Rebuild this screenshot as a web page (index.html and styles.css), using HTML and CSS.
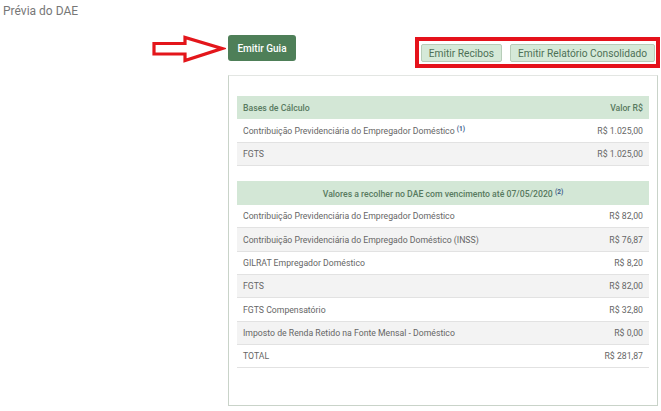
FILE: index.html
```html
<!DOCTYPE html>
<html lang="pt-BR">
<head>
    <meta charset="UTF-8">
    <title>Prévia do DAE</title>
    <link rel="stylesheet" href="styles.css">
</head>
<body>

<div class="page">
    <h1 class="title">Prévia do DAE</h1>

    <div class="toolbar">
        <svg class="arrow" width="76" height="28" viewBox="0 0 76 28">
            <path d="M4,8.5 H35 V2.5 L72,13.5 L35,25.5 V19 H4 Z" fill="#fff" stroke="#e3161b" stroke-width="3.2" stroke-linejoin="miter"/>
        </svg>
        <button class="btn-primary">Emitir Guia</button>
        <div class="highlight">
            <button class="btn-light">Emitir Recibos</button>
            <button class="btn-light">Emitir Relatório Consolidado</button>
        </div>
    </div>

    <div class="panel">
        <table class="dae-table">
            <tr class="head">
                <th>Bases de Cálculo</th>
                <th class="val">Valor R$</th>
            </tr>
            <tr>
                <td>Contribuição Previdenciária do Empregador Doméstico <sup>(1)</sup></td>
                <td class="val">R$ 1.025,00</td>
            </tr>
            <tr>
                <td>FGTS</td>
                <td class="val">R$ 1.025,00</td>
            </tr>
        </table>

        <table class="dae-table">
            <tr class="head">
                <th colspan="2" class="center">Valores a recolher no DAE com vencimento até 07/05/2020 <sup>(2)</sup></th>
            </tr>
            <tr>
                <td>Contribuição Previdenciária do Empregador Doméstico</td>
                <td class="val">R$ 82,00</td>
            </tr>
            <tr>
                <td>Contribuição Previdenciária do Empregado Doméstico (INSS)</td>
                <td class="val">R$ 76,87</td>
            </tr>
            <tr>
                <td>GILRAT Empregador Doméstico</td>
                <td class="val">R$ 8,20</td>
            </tr>
            <tr>
                <td>FGTS</td>
                <td class="val">R$ 82,00</td>
            </tr>
            <tr>
                <td>FGTS Compensatório</td>
                <td class="val">R$ 32,80</td>
            </tr>
            <tr>
                <td>Imposto de Renda Retido na Fonte Mensal - Doméstico</td>
                <td class="val">R$ 0,00</td>
            </tr>
            <tr>
                <td>TOTAL</td>
                <td class="val">R$ 281,87</td>
            </tr>
        </table>
    </div>
</div>

</body>
</html>
```

FILE: styles.css
```css
body {
    margin: 0;
    font-family: Roboto, "Liberation Sans", Arial, sans-serif;
    background: #fff;
    color: #666;
}
.page {
    padding: 0;
}
.title {
    margin: 0;
    padding: 4px 0 0 3px;
    height: 35px;
    box-sizing: border-box;
    font-size: 12px;
    font-weight: normal;
    color: #777;
}
.toolbar {
    display: flex;
    align-items: flex-start;
    padding-left: 150px;
    height: 40px;
}
.arrow {
    display: block;
    margin-right: 2px;
}
.btn-primary {
    width: 68px;
    height: 26px;
    padding: 0;
    border: none;
    border-radius: 3px;
    background: #4e7f58;
    color: #fff;
    font-family: inherit;
    font-size: 10px;
    font-weight: 500;
}
.highlight {
    display: flex;
    gap: 8px;
    margin-left: auto;
    margin-right: 1px;
    margin-top: 2px;
    padding: 3px 1px 2px 2px;
    border: 4px solid #e5121b;
}
.btn-light {
    height: 18px;
    padding: 0 7px;
    border: 1px solid #b7cdb9;
    border-radius: 2px;
    background: #d5e9d8;
    color: #4d7056;
    font-family: inherit;
    font-size: 10.2px;
}
.panel {
    margin: 0 3px 0 228px;
    height: 331px;
    box-sizing: border-box;
    padding: 20px 8px 0 8px;
    border: 1px solid #c9d3c9;
    border-top-color: #e3e6e3;
}
.dae-table {
    width: 100%;
    border-collapse: collapse;
    margin-bottom: 15px;
    font-size: 8.7px;
}
.dae-table th,
.dae-table td {
    height: 23.3px;
    padding: 0 6px;
    box-sizing: border-box;
    text-align: left;
    border-bottom: 1px solid #e2e2e2;
}
.dae-table td {
    color: #666;
}
.dae-table tr:nth-child(odd) td {
    background: #f3f3f3;
}
.dae-table tr:nth-child(even) td {
    background: #fff;
}
.dae-table .head th {
    background: #d3e7d6;
    color: #587a60;
    font-weight: 500;
    border-bottom: none;
}
.dae-table .val {
    text-align: right;
}
.dae-table .center {
    text-align: center;
}
.dae-table sup {
    font-size: 6.5px;
    font-weight: bold;
    color: #3a5a8a;
    vertical-align: 3px;
}
```
